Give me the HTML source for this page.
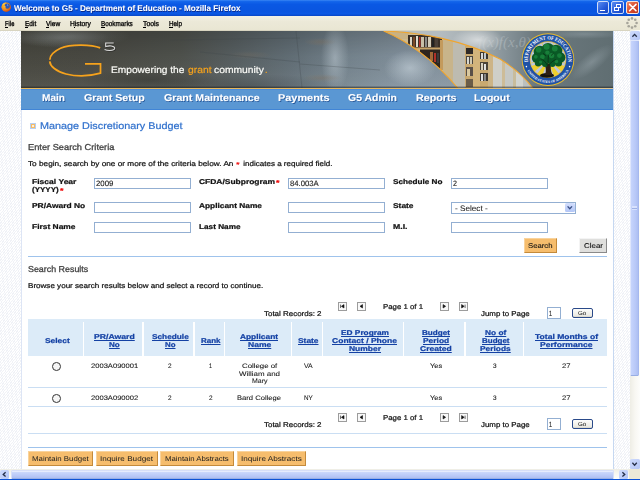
<!DOCTYPE html>
<html><head><meta charset="utf-8"><title>Welcome to G5 - Department of Education</title>
<style>
html,body{margin:0;padding:0;}
body{width:640px;height:480px;overflow:hidden;position:relative;background:#fff;font-family:"Liberation Sans",sans-serif;}
.a{position:absolute;}
.t{position:absolute;white-space:pre;line-height:1;transform-origin:0 0;-webkit-text-stroke:0.22px;text-rendering:geometricPrecision;}
.in{position:absolute;box-sizing:border-box;border:1px solid #93afd2;background:#fff;height:11px;}
.ln{position:absolute;left:27.5px;width:579.5px;height:1px;background:#cadef3;}
.sep{position:absolute;top:321.5px;height:34.5px;width:1.2px;background:#fff;}
.ob{position:absolute;box-sizing:border-box;background:#f6bd6d;border-top:1px solid #f9d39c;border-left:1px solid #f9d39c;border-right:1px solid #c48a3a;border-bottom:1px solid #c48a3a;}
.pi{position:absolute;box-sizing:border-box;width:8.6px;height:8.6px;border:0.8px solid #9c9c9c;background:#f8f8f8;}
</style></head><body>

<!-- page background hatch + content -->
<div class="a" style="left:0;top:30px;width:640px;height:440px;background:repeating-linear-gradient(128deg,#ffffff 0,#ffffff 1.0px,#f0f2f7 1.0px,#f0f2f7 1.9px);"></div>
<div class="a" style="left:20.5px;top:30.5px;width:593.5px;height:439px;background:#fff;border-left:1px solid #dde5f5;border-right:1px solid #c6d8f1;box-sizing:border-box;"></div>

<svg class="a" style="left:21px;top:31px;" width="592" height="57" viewBox="21 31 592 57" preserveAspectRatio="none">
<defs>
<linearGradient id="bg" x1="21" x2="613" y1="0" y2="0" gradientUnits="userSpaceOnUse">
<stop offset="0" stop-color="#4a4a42"/><stop offset="0.12" stop-color="#4b4b44"/><stop offset="0.27" stop-color="#51544f"/>
<stop offset="0.36" stop-color="#596163"/><stop offset="0.46" stop-color="#65727a"/><stop offset="0.55" stop-color="#778690"/>
<stop offset="0.65" stop-color="#8594a0"/><stop offset="1" stop-color="#8f9ba3"/>
</linearGradient>
<linearGradient id="vshade" x1="0" x2="0" y1="31" y2="88" gradientUnits="userSpaceOnUse">
<stop offset="0" stop-color="#000" stop-opacity="0.20"/><stop offset="0.45" stop-color="#000" stop-opacity="0.04"/><stop offset="1" stop-color="#fff" stop-opacity="0.06"/>
</linearGradient>
<linearGradient id="chalk" x1="440" x2="613" y1="0" y2="0" gradientUnits="userSpaceOnUse">
<stop offset="0" stop-color="#b4bcc0"/><stop offset="0.22" stop-color="#a3acb0"/><stop offset="0.38" stop-color="#879399"/><stop offset="0.55" stop-color="#6c797e"/><stop offset="1" stop-color="#606e72"/>
</linearGradient>
<radialGradient id="glow1" cx="0.5" cy="0.5" r="0.5"><stop offset="0" stop-color="#fff" stop-opacity="0.55"/><stop offset="1" stop-color="#fff" stop-opacity="0"/></radialGradient>
<radialGradient id="glow2" cx="0.5" cy="0.5" r="0.5"><stop offset="0" stop-color="#c8d4dc" stop-opacity="0.6"/><stop offset="1" stop-color="#c8d4dc" stop-opacity="0"/></radialGradient>
<radialGradient id="dark1" cx="0.5" cy="0.5" r="0.5"><stop offset="0" stop-color="#000" stop-opacity="0.22"/><stop offset="1" stop-color="#000" stop-opacity="0"/></radialGradient>
<radialGradient id="brown" cx="0.5" cy="0.5" r="0.5"><stop offset="0" stop-color="#7e6e5c" stop-opacity="0.38"/><stop offset="1" stop-color="#8a7860" stop-opacity="0"/></radialGradient>
<clipPath id="leaf"><path d="M383.75 31 Q417 32.5 442 38.4 Q475 46 500 59 Q521 72 533 88.5 L458 88.5 C435 60 405 40 383.75 31Z"/></clipPath>
<clipPath id="chalkclip"><path d="M383.75 31 Q417 32.5 442 38.4 Q475 46 500 59 Q521 72 533 88.5 L613 88.5 L613 31Z"/></clipPath>
</defs>
<rect x="21" y="31" width="592" height="57" fill="url(#bg)"/>
<rect x="21" y="31" width="592" height="57" fill="url(#vshade)"/>
<!-- floor texture -->
<ellipse cx="335" cy="58" rx="14" ry="36" fill="url(#glow2)" opacity="0.8"/>
<ellipse cx="410" cy="68" rx="26" ry="18" fill="url(#glow2)"/>
<ellipse cx="60" cy="38" rx="50" ry="10" fill="url(#glow2)" opacity="0.25"/>
<ellipse cx="150" cy="80" rx="70" ry="12" fill="url(#dark1)"/>
<ellipse cx="250" cy="86" rx="100" ry="12" fill="url(#dark1)" opacity="0.8"/>
<ellipse cx="70" cy="36" rx="60" ry="12" fill="url(#glow2)" opacity="0.3"/>
<ellipse cx="320" cy="42" rx="16" ry="4" fill="url(#brown)"/>
<ellipse cx="322" cy="78" rx="20" ry="4" fill="url(#brown)"/>
<ellipse cx="250" cy="55" rx="22" ry="4" fill="url(#brown)" opacity="0.6"/>
<path d="M200 52 L300 62 M296 31 L302 88 M170 40 L300 38 M300 64 L380 70" stroke="#3e464a" stroke-width="0.8" opacity="0.35" fill="none"/>
<!-- chalkboard -->
<g clip-path="url(#chalkclip)">
<rect x="380" y="31" width="233" height="58" fill="url(#chalk)"/>
<ellipse cx="478" cy="40" rx="26" ry="12" fill="url(#glow1)"/>
<ellipse cx="592" cy="62" rx="26" ry="9" fill="url(#glow2)" opacity="0.45" transform="rotate(-38 592 62)"/>
<ellipse cx="585" cy="34" rx="40" ry="5" fill="url(#glow2)" opacity="0.4"/>

<text x="478" y="47" font-family="Liberation Serif, serif" font-style="italic" font-size="15" fill="#d4dadc" opacity="0.33">f(x)f(x,θ)</text>
</g>
<!-- library leaf -->
<g clip-path="url(#leaf)">
<rect x="380" y="31" width="160" height="58" fill="#cdb98f"/>
<rect x="383" y="31" width="26" height="8" fill="#c9b284"/>
<!-- first shelf -->
<rect x="408" y="35" width="34" height="13" fill="#3b3026"/>
<rect x="410" y="37" width="2" height="10" fill="#d8d4c8"/><rect x="413" y="37" width="2" height="10" fill="#7a4a2a"/><rect x="416" y="36" width="2" height="11" fill="#e0dcd0"/><rect x="419" y="37" width="1.5" height="10" fill="#b03028"/><rect x="421" y="37" width="3" height="10" fill="#c8c0a8"/><rect x="425" y="37" width="2" height="10" fill="#8a8a88"/><rect x="428" y="37" width="3" height="10" fill="#d4ccb8"/><rect x="432" y="38" width="2" height="9" fill="#222"/><rect x="435" y="38" width="3" height="9" fill="#4a4038"/>
<rect x="408" y="47.5" width="34" height="2" fill="#c9a468"/>
<rect x="420" y="49.5" width="22" height="20" fill="#2e251d"/>
<rect x="430" y="52" width="3" height="9" fill="#a06838"/><rect x="434" y="53" width="2" height="9" fill="#b03028"/><rect x="437" y="53" width="2" height="10" fill="#3a3a3a"/>
<rect x="440" y="40" width="3" height="30" fill="#c39a5c"/>
<rect x="443" y="40" width="10" height="48" fill="#c8b48a"/>
<rect x="453" y="42" width="12" height="46" fill="#bdbbb0"/>
<!-- second shelf unit -->
<rect x="465" y="46" width="32" height="42" fill="#c9a970"/>
<rect x="466" y="48" width="7" height="6" fill="#2e2a28"/><rect x="466" y="56" width="7" height="8" fill="#4a4640"/><rect x="467" y="57" width="2" height="7" fill="#d8d8d0"/><rect x="470" y="57" width="2" height="7" fill="#d0c8b0"/>
<rect x="466" y="67" width="7" height="9" fill="#5a5048"/><rect x="467" y="69" width="3" height="7" fill="#d8c8a0"/>
<rect x="466" y="79" width="7" height="8" fill="#6a5c48"/>
<rect x="473" y="46" width="7" height="42" fill="#d2b47c"/>
<rect x="480" y="52" width="8" height="7" fill="#3a3632"/><rect x="481" y="53" width="2" height="6" fill="#d8d8d8"/><rect x="484" y="53" width="2" height="6" fill="#c0c8d0"/>
<rect x="480" y="62" width="8" height="8" fill="#4a4238"/><rect x="481" y="63" width="2" height="7" fill="#d8d0c0"/><rect x="484" y="64" width="2" height="6" fill="#e0e0e0"/>
<rect x="480" y="73" width="8" height="8" fill="#3e3830"/><rect x="481" y="74" width="2" height="7" fill="#e0e0e0"/><rect x="484" y="74" width="2" height="7" fill="#888"/>
<rect x="488" y="50" width="5" height="38" fill="#cdb486"/>
<rect x="493" y="55" width="9" height="33" fill="#cfcfc8"/>
<rect x="502" y="60" width="3" height="28" fill="#cdbc98"/>
<rect x="505" y="62" width="8" height="26" fill="#c6c8c4"/>
<rect x="513" y="66" width="3" height="22" fill="#c8bc9c"/>
<rect x="516" y="68" width="7" height="20" fill="#d2d4d0"/>
<rect x="523" y="74" width="10" height="14" fill="#bcc0be"/>
</g>
<!-- orange curves -->
<path d="M383.75 31 C405 40 435 60 458 88.5" fill="none" stroke="#f0a630" stroke-width="1.1"/>
<path d="M383.75 31 Q417 32.5 442 38.4 Q475 46 500 59 Q521 72 533 88.5" fill="none" stroke="#f0a630" stroke-width="1.1"/>
<!-- seal -->
<g>
<circle cx="548" cy="59.6" r="26.3" fill="#e9bb2c"/>
<circle cx="548" cy="59.6" r="25.4" fill="#1f52a6"/>
<circle cx="548" cy="59.6" r="18.3" fill="#e2b83a"/>
<circle cx="548" cy="59.6" r="17.5" fill="#bcc6dc"/>
<g stroke="#e8cf3a" stroke-width="0.7" opacity="0.9"><path d="M548 59.6 L531 56 M548 59.6 L532 50 M548 59.6 L536 45.5 M548 59.6 L542 43 M548 59.6 L548 42.2 M548 59.6 L554 43 M548 59.6 L560 45.5 M548 59.6 L564 50 M548 59.6 L565 56 M548 59.6 L565 63 M548 59.6 L531 63"/></g>
<path d="M548 60 L531.6 66 L534.6 71.6 Z M548 60 L537 74 L542 76.4 Z M548 60 L545 77 L551 77 Z M548 60 L554 76.4 L559 74 Z M548 60 L561.4 71.6 L564.4 66 Z" fill="#f0d024" opacity="0.95"/>
<ellipse cx="547" cy="75.4" rx="7" ry="2.3" fill="#17150f"/>
<path d="M545.2 75 C546.4 70.5 546 67 544.2 63.5 L551.4 63.5 C550.2 67 550.6 71 552.6 75 Z" fill="#2e2014"/>
<g fill="#0a5a26"><circle cx="540.0" cy="52.0" r="6.3"/><circle cx="548.0" cy="49.2" r="6.3"/><circle cx="556.0" cy="51.0" r="6.3"/><circle cx="536.6" cy="58.0" r="4.8"/><circle cx="543.0" cy="59.5" r="5.5"/><circle cx="552.0" cy="58.5" r="6.0"/><circle cx="560.0" cy="57.5" r="5.4"/><circle cx="538.2" cy="63.0" r="3.4"/><circle cx="558.5" cy="63.0" r="3.6"/><circle cx="548.0" cy="55.0" r="7.0"/><circle cx="545.0" cy="64.0" r="3.0"/><circle cx="552.5" cy="64.0" r="3.0"/></g>
<g fill="#1f8f42" opacity="0.7"><circle cx="538.6" cy="49.8" r="2.8"/><circle cx="546.6" cy="46.8" r="3.0"/><circle cx="554.8" cy="48.6" r="2.9"/><circle cx="542.4" cy="57.0" r="2.4"/><circle cx="551.6" cy="55.6" r="2.7"/><circle cx="559.4" cy="55.6" r="2.4"/><circle cx="535.8" cy="56.8" r="1.9"/><circle cx="547.4" cy="52.6" r="2.2"/><circle cx="556.4" cy="61.4" r="1.8"/><circle cx="540.6" cy="62.0" r="1.6"/></g>
<path d="M547.6 66 C546 62 543.6 60 540.6 58.6 M548 65 C548 61 548.2 58 548.6 55.4 M548.6 66 C550.6 62.4 553 60.6 556.4 59.4 M543 53.4 l3 2.4 M553.6 53.2 l-2.6 2.4" stroke="#0a2a14" stroke-width="0.9" fill="none" opacity="0.8"/>
<g font-family="Liberation Serif, serif" font-weight="bold" fill="#fff"><text transform="translate(527.92 60.40) rotate(-92.3) scale(0.833 1)" text-anchor="middle" font-size="5.4">D</text><text transform="translate(528.03 57.28) rotate(-83.4) scale(0.833 1)" text-anchor="middle" font-size="5.4">E</text><text transform="translate(528.57 54.46) rotate(-75.2) scale(0.833 1)" text-anchor="middle" font-size="5.4">P</text><text transform="translate(529.55 51.63) rotate(-66.6) scale(0.833 1)" text-anchor="middle" font-size="5.4">A</text><text transform="translate(531.07 48.76) rotate(-57.4) scale(0.833 1)" text-anchor="middle" font-size="5.4">R</text><text transform="translate(532.96 46.27) rotate(-48.5) scale(0.833 1)" text-anchor="middle" font-size="5.4">T</text><text transform="translate(535.59 43.79) rotate(-38.1) scale(0.833 1)" text-anchor="middle" font-size="5.4">M</text><text transform="translate(538.63 41.82) rotate(-27.8) scale(0.833 1)" text-anchor="middle" font-size="5.4">E</text><text transform="translate(541.49 40.58) rotate(-18.9) scale(0.833 1)" text-anchor="middle" font-size="5.4">N</text><text transform="translate(544.52 39.80) rotate(-10.0) scale(0.833 1)" text-anchor="middle" font-size="5.4">T</text><text transform="translate(548.87 39.52) rotate(2.5) scale(0.833 1)" text-anchor="middle" font-size="5.4">O</text><text transform="translate(551.97 39.90) rotate(11.4) scale(0.833 1)" text-anchor="middle" font-size="5.4">F</text><text transform="translate(555.79 41.07) rotate(22.8) scale(0.833 1)" text-anchor="middle" font-size="5.4">E</text><text transform="translate(558.57 42.50) rotate(31.7) scale(0.833 1)" text-anchor="middle" font-size="5.4">D</text><text transform="translate(561.18 44.42) rotate(41.0) scale(0.833 1)" text-anchor="middle" font-size="5.4">U</text><text transform="translate(563.45 46.74) rotate(50.2) scale(0.833 1)" text-anchor="middle" font-size="5.4">C</text><text transform="translate(565.32 49.40) rotate(59.5) scale(0.833 1)" text-anchor="middle" font-size="5.4">A</text><text transform="translate(566.69 52.20) rotate(68.4) scale(0.833 1)" text-anchor="middle" font-size="5.4">T</text><text transform="translate(567.43 54.46) rotate(75.2) scale(0.833 1)" text-anchor="middle" font-size="5.4">I</text><text transform="translate(567.94 57.03) rotate(82.7) scale(0.833 1)" text-anchor="middle" font-size="5.4">O</text><text transform="translate(568.08 60.40) rotate(92.3) scale(0.833 1)" text-anchor="middle" font-size="5.4">N</text><text transform="translate(527.98 71.72) rotate(58.8) scale(0.951 1)" text-anchor="middle" font-size="3.6">U</text><text transform="translate(529.37 73.77) rotate(52.7) scale(0.951 1)" text-anchor="middle" font-size="3.6">N</text><text transform="translate(530.59 75.23) rotate(48.1) scale(0.951 1)" text-anchor="middle" font-size="3.6">I</text><text transform="translate(531.84 76.53) rotate(43.7) scale(0.951 1)" text-anchor="middle" font-size="3.6">T</text><text transform="translate(533.57 78.02) rotate(38.1) scale(0.951 1)" text-anchor="middle" font-size="3.6">E</text><text transform="translate(535.51 79.39) rotate(32.2) scale(0.951 1)" text-anchor="middle" font-size="3.6">D</text><text transform="translate(538.19 80.84) rotate(24.8) scale(0.951 1)" text-anchor="middle" font-size="3.6">S</text><text transform="translate(540.12 81.63) rotate(19.7) scale(0.951 1)" text-anchor="middle" font-size="3.6">T</text><text transform="translate(542.40 82.32) rotate(13.8) scale(0.951 1)" text-anchor="middle" font-size="3.6">A</text><text transform="translate(544.73 82.77) rotate(8.0) scale(0.951 1)" text-anchor="middle" font-size="3.6">T</text><text transform="translate(547.01 82.98) rotate(2.4) scale(0.951 1)" text-anchor="middle" font-size="3.6">E</text><text transform="translate(549.10 82.97) rotate(-2.7) scale(0.951 1)" text-anchor="middle" font-size="3.6">S</text><text transform="translate(552.21 82.62) rotate(-10.4) scale(0.951 1)" text-anchor="middle" font-size="3.6">O</text><text transform="translate(554.53 82.07) rotate(-16.2) scale(0.951 1)" text-anchor="middle" font-size="3.6">F</text><text transform="translate(557.47 81.00) rotate(-23.9) scale(0.951 1)" text-anchor="middle" font-size="3.6">A</text><text transform="translate(560.00 79.69) rotate(-30.9) scale(0.951 1)" text-anchor="middle" font-size="3.6">M</text><text transform="translate(562.28 78.14) rotate(-37.6) scale(0.951 1)" text-anchor="middle" font-size="3.6">E</text><text transform="translate(564.09 76.59) rotate(-43.4) scale(0.951 1)" text-anchor="middle" font-size="3.6">R</text><text transform="translate(565.41 75.23) rotate(-48.1) scale(0.951 1)" text-anchor="middle" font-size="3.6">I</text><text transform="translate(566.63 73.77) rotate(-52.7) scale(0.951 1)" text-anchor="middle" font-size="3.6">C</text><text transform="translate(568.02 71.72) rotate(-58.8) scale(0.951 1)" text-anchor="middle" font-size="3.6">A</text></g>
<circle cx="526.4" cy="66.6" r="0.8" fill="#fff"/><circle cx="569.6" cy="66.6" r="0.8" fill="#fff"/>
</g>
<rect x="21" y="86.6" width="592" height="1.4" fill="#1a1c1a" opacity="0.5"/>
<!-- 5 -->
<path d="M113.7 43 L105.7 43 L105.7 46.5 C108 45.9 110 45.8 111.2 46 C113.6 46.4 114.8 47.3 114.7 48.4 C114.5 49.8 112.4 50.4 109.8 50.4 C107.6 50.4 105.8 50.1 104.6 49.5" fill="none" stroke="#1c1c1a" stroke-width="1.1" opacity="0.55" transform="translate(0.7 0.7)"/>
<path d="M113.7 43 L105.7 43 L105.7 46.5 C108 45.9 110 45.8 111.2 46 C113.6 46.4 114.8 47.3 114.7 48.4 C114.5 49.8 112.4 50.4 109.8 50.4 C107.6 50.4 105.8 50.1 104.6 49.5" fill="none" stroke="#dedede" stroke-width="1.05"/>
<!-- G logo -->
<g fill="none" stroke="#f6a21c" stroke-width="1.75" stroke-linecap="butt" stroke-linejoin="miter">
<path d="M100.2 47.9 C92 44.6 71 43.6 60.5 48.3 C53.5 51.6 50 55.8 49.8 59.7"/>
<path d="M49.7 61.3 C50.2 66.2 56 71.4 66 74 C78 77 92 75.6 100.5 73.2 L100.5 63.8 L85 63.8"/>
</g>
</svg>


<!-- gold line + nav -->
<div class="a" style="left:21px;top:87.9px;width:592px;height:1.2px;background:linear-gradient(90deg,#e8b85c 0,#e6b65c 60%,#dcc492 100%);"></div>
<div class="a" style="left:21px;top:89px;width:592px;height:20.6px;background:#5a97d3;border-top:1px solid #4c8cd9;border-bottom:1px solid #4185d6;box-sizing:border-box;"></div>

<!-- heading icon -->
<div class="a" style="left:30.2px;top:123px;width:5.8px;height:5.8px;box-sizing:border-box;border:0.9px solid #b7cff2;background:#f7bc66;"></div>
<div class="a" style="left:32.4px;top:125.1px;width:1.8px;height:1.6px;background:#fdf0dc;"></div>

<!-- form inputs -->
<div class="in" style="left:94px;top:178px;width:96.5px;"></div>
<div class="in" style="left:94px;top:202px;width:96.5px;"></div>
<div class="in" style="left:94px;top:222px;width:96.5px;"></div>
<div class="in" style="left:288px;top:178px;width:96.5px;"></div>
<div class="in" style="left:288px;top:202px;width:96.5px;"></div>
<div class="in" style="left:288px;top:222px;width:96.5px;"></div>
<div class="in" style="left:451px;top:178px;width:96.5px;"></div>
<div class="in" style="left:451px;top:222px;width:96.5px;"></div>
<div class="in" style="left:451px;top:202px;width:125px;height:11.5px;"></div>
<div class="a" style="left:565px;top:203.2px;width:9.6px;height:9.2px;background:linear-gradient(#d4dffd,#b3c6f6);border-radius:1.5px;"></div>
<svg class="a" style="left:565px;top:203.2px;" width="9.6" height="9.2" viewBox="0 0 9.6 9.2"><path d="M2.6 3.4 L4.8 5.8 L7 3.4" fill="none" stroke="#3a4f86" stroke-width="1.4"/></svg>

<!-- search / clear -->
<div class="ob" style="left:523.5px;top:238px;width:33px;height:14.5px;"></div>
<div class="a" style="left:579px;top:238px;width:28px;height:14.5px;box-sizing:border-box;background:#dfdfdd;border-top:1px solid #f4f4f4;border-left:1px solid #f4f4f4;border-right:1px solid #8a8a8a;border-bottom:1px solid #8a8a8a;"></div>

<!-- rules -->
<div class="ln" style="top:256px;background:#9fc3ec;"></div>
<div class="ln" style="top:387px;"></div>
<div class="ln" style="top:406px;"></div>
<div class="ln" style="top:432.6px;"></div>
<div class="ln" style="top:447px;background:#9fc3ec;"></div>

<!-- table header -->
<div class="a" style="left:27.5px;top:318.7px;width:579px;height:37.2px;background:#dcebf8;"></div>
<div class="sep" style="left:82.7px;"></div>
<div class="sep" style="left:142.4px;"></div>
<div class="sep" style="left:193.4px;"></div>
<div class="sep" style="left:223.9px;"></div>
<div class="sep" style="left:290.7px;"></div>
<div class="sep" style="left:321.9px;"></div>
<div class="sep" style="left:402.7px;"></div>
<div class="sep" style="left:464.4px;"></div>
<div class="sep" style="left:522.7px;"></div>

<!-- radios -->
<div class="a" style="left:52.3px;top:362.3px;width:8.8px;height:8.8px;border-radius:50%;box-sizing:border-box;border:1px solid #333;background:#f6f6f6;"></div>
<div class="a" style="left:52.3px;top:393.9px;width:8.8px;height:8.8px;border-radius:50%;box-sizing:border-box;border:1px solid #333;background:#f6f6f6;"></div>

<div class="pi" style="left:338.2px;top:302.2px;"></div>
<svg class="a" style="left:338.2px;top:302.2px;" width="8.6" height="8.6" viewBox="0 0 8.6 8.6"><path d="M2.5 2.6 V6.0 M6.0 2.6 L3.4 4.3 L6.0 6.0 Z" fill="#111" stroke="#111" stroke-width="0.6"/></svg>
<div class="pi" style="left:357.2px;top:302.2px;"></div>
<svg class="a" style="left:357.2px;top:302.2px;" width="8.6" height="8.6" viewBox="0 0 8.6 8.6"><path d="M5.5 2.6 L3.0 4.3 L5.5 6.0 Z" fill="#111" stroke="#111" stroke-width="0.6"/></svg>
<div class="pi" style="left:440.1px;top:302.2px;"></div>
<svg class="a" style="left:440.1px;top:302.2px;" width="8.6" height="8.6" viewBox="0 0 8.6 8.6"><path d="M3.1 2.6 L5.6 4.3 L3.1 6.0 Z" fill="#111" stroke="#111" stroke-width="0.6"/></svg>
<div class="pi" style="left:459.0px;top:302.2px;"></div>
<svg class="a" style="left:459.0px;top:302.2px;" width="8.6" height="8.6" viewBox="0 0 8.6 8.6"><path d="M6.1 2.6 V6.0 M2.6 2.6 L5.2 4.3 L2.6 6.0 Z" fill="#111" stroke="#111" stroke-width="0.6"/></svg>
<div class="in" style="left:546.8px;top:307.0px;width:14.6px;height:11.6px;"></div>
<div class="a" style="left:572px;top:308.2px;width:21px;height:10px;box-sizing:border-box;border:0.9px solid #2a4a8a;border-radius:2px;background:linear-gradient(#fdfdfb,#ecebe4 80%,#d8d4c6);"></div>
<div class="pi" style="left:338.2px;top:413.2px;"></div>
<svg class="a" style="left:338.2px;top:413.2px;" width="8.6" height="8.6" viewBox="0 0 8.6 8.6"><path d="M2.5 2.6 V6.0 M6.0 2.6 L3.4 4.3 L6.0 6.0 Z" fill="#111" stroke="#111" stroke-width="0.6"/></svg>
<div class="pi" style="left:357.2px;top:413.2px;"></div>
<svg class="a" style="left:357.2px;top:413.2px;" width="8.6" height="8.6" viewBox="0 0 8.6 8.6"><path d="M5.5 2.6 L3.0 4.3 L5.5 6.0 Z" fill="#111" stroke="#111" stroke-width="0.6"/></svg>
<div class="pi" style="left:440.1px;top:413.2px;"></div>
<svg class="a" style="left:440.1px;top:413.2px;" width="8.6" height="8.6" viewBox="0 0 8.6 8.6"><path d="M3.1 2.6 L5.6 4.3 L3.1 6.0 Z" fill="#111" stroke="#111" stroke-width="0.6"/></svg>
<div class="pi" style="left:459.0px;top:413.2px;"></div>
<svg class="a" style="left:459.0px;top:413.2px;" width="8.6" height="8.6" viewBox="0 0 8.6 8.6"><path d="M6.1 2.6 V6.0 M2.6 2.6 L5.2 4.3 L2.6 6.0 Z" fill="#111" stroke="#111" stroke-width="0.6"/></svg>
<div class="in" style="left:546.8px;top:418.0px;width:14.6px;height:11.6px;"></div>
<div class="a" style="left:572px;top:419.2px;width:21px;height:10px;box-sizing:border-box;border:0.9px solid #2a4a8a;border-radius:2px;background:linear-gradient(#fdfdfb,#ecebe4 80%,#d8d4c6);"></div>

<!-- bottom buttons -->
<div class="ob" style="left:27.8px;top:451.4px;width:65.2px;height:14.2px;"></div>
<div class="ob" style="left:95.8px;top:451.4px;width:61.8px;height:14.2px;"></div>
<div class="ob" style="left:160.4px;top:451.4px;width:73.6px;height:14.2px;"></div>
<div class="ob" style="left:236.6px;top:451.4px;width:69.4px;height:14.2px;"></div>

<!-- title bar -->
<div class="a" style="left:0;top:0;width:640px;height:16px;background:linear-gradient(#3a86f4 0,#1264ea 10%,#0a58e4 28%,#0a55e0 70%,#0b58e4 86%,#0846c6 100%);"></div>
<!-- firefox icon -->
<svg class="a" style="left:1.2px;top:2px;" width="10.4" height="10" viewBox="0 0 12 12">
<defs><radialGradient id="fxo" cx="0.35" cy="0.3" r="0.8"><stop offset="0" stop-color="#fcc030"/><stop offset="0.55" stop-color="#f08a1c"/><stop offset="1" stop-color="#cc4410"/></radialGradient></defs>
<circle cx="6" cy="6.2" r="5.6" fill="url(#fxo)"/>
<circle cx="7.2" cy="4.9" r="3.2" fill="#2c56b8"/>
<path d="M6.6 2 C7.6 2.6 7.8 3.8 7.2 4.8 L8.4 5 C8.8 3.6 8 2.4 6.6 2Z" fill="#7aa8ec"/>
<path d="M0.6 5.4 C0.8 9.4 4.2 11.8 7.6 11.2 C10 10.6 11.6 8.4 11.4 6 C10.6 8.4 8.6 9.4 6.6 8.8 C4.8 8.2 4.6 6.4 5.8 5.6 C4.2 5.4 3.4 4 4 2.4 C2.2 3 0.6 4 0.6 5.4Z" fill="url(#fxo)"/>
<path d="M1 4.2 C1.8 2 3.8 0.8 6 0.7 C4.6 1.4 3.8 2.3 3.6 3.4 Z" fill="#f8c848"/>
</svg>
<!-- window buttons -->
<div class="a" style="left:597px;top:1.2px;width:12.4px;height:13.2px;box-sizing:border-box;border:0.8px solid #cfdcf8;border-radius:2px;background:linear-gradient(135deg,#5a8cf0,#2458d8 60%,#1a48c0);"></div>
<div class="a" style="left:600.2px;top:9.6px;width:4.4px;height:1.6px;background:#fff;"></div>
<div class="a" style="left:611.2px;top:1.2px;width:13.2px;height:13.2px;box-sizing:border-box;border:0.8px solid #cfdcf8;border-radius:2px;background:linear-gradient(135deg,#5a8cf0,#2458d8 60%,#1a48c0);"></div>
<div class="a" style="left:616.4px;top:4.2px;width:5px;height:4.2px;box-sizing:border-box;border:0.9px solid #fff;border-top-width:1.4px;"></div>
<div class="a" style="left:614.4px;top:6.6px;width:5px;height:4.4px;box-sizing:border-box;border:0.9px solid #fff;border-top-width:1.4px;background:#2a5cd8;"></div>
<div class="a" style="left:625.6px;top:1.2px;width:13.6px;height:13.2px;box-sizing:border-box;border:0.8px solid #f4e4dc;border-radius:2px;background:linear-gradient(135deg,#ec8a68,#d8482a 55%,#b8341c);"></div>
<svg class="a" style="left:625.6px;top:1.2px;" width="13.6" height="13.2" viewBox="0 0 13.6 13.2"><path d="M3.6 3.4 L10 9.8 M10 3.4 L3.6 9.8" stroke="#fff" stroke-width="1.6" stroke-linecap="round"/></svg>

<!-- menu bar -->
<div class="a" style="left:0;top:16px;width:640px;height:14.4px;background:linear-gradient(#f3f1e6,#ece9d8 40%,#e9e6d3);"></div>
<div class="a" style="left:0;top:29.8px;width:640px;height:0.8px;background:#d8d4c0;"></div>
<svg class="a" style="left:626px;top:17px;" width="12" height="12" viewBox="0 0 12 12"><g fill="#a6a49a"><circle cx="10.60" cy="6.00" r="1.3"/><circle cx="9.25" cy="9.25" r="1.3"/><circle cx="6.00" cy="10.60" r="1.3"/><circle cx="2.75" cy="9.25" r="1.3"/><circle cx="1.40" cy="6.00" r="1.3"/><circle cx="2.75" cy="2.75" r="1.3"/><circle cx="6.00" cy="1.40" r="1.3"/><circle cx="9.25" cy="2.75" r="1.3"/></g></svg>

<!-- vertical scrollbar -->
<div class="a" style="left:630px;top:30.4px;width:10px;height:439px;background:linear-gradient(90deg,#eeede5,#f8f7f2 50%,#fdfdfb);"></div>
<div class="a" style="left:630.4px;top:40px;width:9px;height:335.6px;box-sizing:border-box;border-radius:1.5px;background:linear-gradient(90deg,#c6d4fc,#b9c9f8 60%,#adbff2);border:0.6px solid #dfe6fc;border-bottom-color:#98aee4;border-right-color:#a6b8ee;"></div>
<div class="a" style="left:632.4px;top:205.6px;width:4.6px;height:4.4px;background:repeating-linear-gradient(#dfe7ff 0,#dfe7ff 0.7px,#97abe0 0.7px,#97abe0 1.4px);opacity:.8;"></div>
<div class="a" style="left:630.4px;top:30.6px;width:9.2px;height:9.4px;border-radius:1.5px;background:linear-gradient(135deg,#cfdbfd,#b4c5f6);"></div>
<svg class="a" style="left:630.4px;top:30.6px;" width="9.2" height="9.4" viewBox="0 0 9.2 9.4"><path d="M2.4 5.8 L4.6 3.4 L6.8 5.8" fill="none" stroke="#262f48" stroke-width="1.3"/></svg>
<div class="a" style="left:630.4px;top:459.2px;width:9.2px;height:9.8px;border-radius:1.5px;background:linear-gradient(135deg,#cfdbfd,#b4c5f6);"></div>
<svg class="a" style="left:630.4px;top:459.2px;" width="9.2" height="9.8" viewBox="0 0 9.2 9.8"><path d="M2.4 3.8 L4.6 6.2 L6.8 3.8" fill="none" stroke="#262f48" stroke-width="1.3"/></svg>

<!-- horizontal scrollbar -->
<div class="a" style="left:0;top:469.4px;width:640px;height:9.4px;background:linear-gradient(#eeede5,#f8f7f2 50%,#fdfdfb);"></div>
<div class="a" style="left:628.6px;top:469.4px;width:11.4px;height:9.4px;background:#ece9d8;"></div>
<div class="a" style="left:10.6px;top:469.8px;width:603.4px;height:8.8px;box-sizing:border-box;border-radius:1.5px;background:linear-gradient(#f4f6fe 0,#c8d5fb 22%,#bccbf8 60%,#aebff2);border:0.5px solid #d6def8;border-bottom-color:#98aee4;"></div>
<div class="a" style="left:0.2px;top:469.8px;width:8.8px;height:8.8px;border-radius:1.5px;background:linear-gradient(135deg,#cfdbfd,#b4c5f6);"></div>
<svg class="a" style="left:0.2px;top:469.8px;" width="8.8" height="8.8" viewBox="0 0 8.8 8.8"><path d="M5.6 2.2 L3.2 4.4 L5.6 6.6" fill="none" stroke="#262f48" stroke-width="1.3"/></svg>
<div class="a" style="left:619.2px;top:469.8px;width:9.2px;height:8.8px;border-radius:1.5px;background:linear-gradient(135deg,#cfdbfd,#b4c5f6);"></div>
<svg class="a" style="left:619.2px;top:469.8px;" width="9.2" height="8.8" viewBox="0 0 9.2 8.8"><path d="M3.4 2.2 L5.8 4.4 L3.4 6.6" fill="none" stroke="#262f48" stroke-width="1.3"/></svg>
<!-- bottom border -->
<div class="a" style="left:0;top:478.7px;width:640px;height:1.3px;background:#0c52d6;"></div>

<div class="a" style="left:5.0px;top:26.7px;width:3.2px;height:0.7px;background:#000;"></div><div class="a" style="left:24.8px;top:26.7px;width:3.6px;height:0.7px;background:#000;"></div><div class="a" style="left:45.6px;top:26.7px;width:3.8px;height:0.7px;background:#000;"></div><div class="a" style="left:73.6px;top:26.7px;width:1.4px;height:0.7px;background:#000;"></div><div class="a" style="left:100.8px;top:26.7px;width:3.8px;height:0.7px;background:#000;"></div><div class="a" style="left:143.0px;top:26.7px;width:3.4px;height:0.7px;background:#000;"></div><div class="a" style="left:168.5px;top:26.7px;width:4.2px;height:0.7px;background:#000;"></div>

<div class="a" style="left:0;top:0;width:640px;height:480px;will-change:transform;">
<span class="t" style="left:14.00px;top:4px;font-size:8.40px;color:#fff;transform:scaleX(0.9722);font-weight:bold;text-shadow:0.6px 0.6px 0 #0a2a8a;-webkit-text-stroke:0.08px;">Welcome to G5 - Department of Education - Mozilla Firefox</span>
<span class="t" style="left:5.00px;top:20px;font-size:7.20px;color:#000;transform:scaleX(0.8108);-webkit-text-stroke:0.3px;">File</span>
<span class="t" style="left:24.75px;top:20px;font-size:7.20px;color:#000;transform:scaleX(0.9079);-webkit-text-stroke:0.3px;">Edit</span>
<span class="t" style="left:45.60px;top:20px;font-size:7.20px;color:#000;transform:scaleX(0.9157);-webkit-text-stroke:0.3px;">View</span>
<span class="t" style="left:69.50px;top:20px;font-size:7.20px;color:#000;transform:scaleX(0.9385);-webkit-text-stroke:0.3px;">History</span>
<span class="t" style="left:100.75px;top:20px;font-size:7.20px;color:#000;transform:scaleX(0.8831);-webkit-text-stroke:0.3px;">Bookmarks</span>
<span class="t" style="left:143.00px;top:20px;font-size:7.20px;color:#000;transform:scaleX(0.9534);-webkit-text-stroke:0.3px;">Tools</span>
<span class="t" style="left:168.50px;top:20px;font-size:7.20px;color:#000;transform:scaleX(0.8786);-webkit-text-stroke:0.3px;">Help</span>
<span class="t" style="left:110.80px;top:66px;font-size:9.60px;color:#fafaf6;transform:scaleX(1.0587);-webkit-text-stroke:0.2px;">Empowering the</span>
<span class="t" style="left:187.80px;top:66px;font-size:9.60px;color:#f5a21c;transform:scaleX(1.0743);-webkit-text-stroke:0.2px;">grant</span>
<span class="t" style="left:213.90px;top:66px;font-size:9.60px;color:#fafaf6;transform:scaleX(1.0756);-webkit-text-stroke:0.2px;">community</span>
<span class="t" style="left:264.60px;top:66px;font-size:9.60px;color:#f5a21c;transform:scaleX(0.9731);">.</span>
<span class="t" style="left:42.00px;top:94px;font-size:9.90px;color:#fff;transform:scaleX(1.0222);font-weight:bold;text-shadow:0.8px 0.8px 0.6px #2c5c9c;-webkit-text-stroke:0.12px;">Main</span>
<span class="t" style="left:83.75px;top:94px;font-size:9.90px;color:#fff;transform:scaleX(1.0749);font-weight:bold;text-shadow:0.8px 0.8px 0.6px #2c5c9c;-webkit-text-stroke:0.12px;">Grant Setup</span>
<span class="t" style="left:163.75px;top:94px;font-size:9.90px;color:#fff;transform:scaleX(1.0759);font-weight:bold;text-shadow:0.8px 0.8px 0.6px #2c5c9c;-webkit-text-stroke:0.12px;">Grant Maintenance</span>
<span class="t" style="left:278.00px;top:94px;font-size:9.90px;color:#fff;transform:scaleX(1.1038);font-weight:bold;text-shadow:0.8px 0.8px 0.6px #2c5c9c;-webkit-text-stroke:0.12px;">Payments</span>
<span class="t" style="left:348.00px;top:94px;font-size:9.90px;color:#fff;transform:scaleX(1.0587);font-weight:bold;text-shadow:0.8px 0.8px 0.6px #2c5c9c;-webkit-text-stroke:0.12px;">G5 Admin</span>
<span class="t" style="left:415.75px;top:94px;font-size:9.90px;color:#fff;transform:scaleX(1.0854);font-weight:bold;text-shadow:0.8px 0.8px 0.6px #2c5c9c;-webkit-text-stroke:0.12px;">Reports</span>
<span class="t" style="left:474.25px;top:94px;font-size:9.90px;color:#fff;transform:scaleX(1.0687);font-weight:bold;text-shadow:0.8px 0.8px 0.6px #2c5c9c;-webkit-text-stroke:0.12px;">Logout</span>
<span class="t" style="left:40.00px;top:122px;font-size:9.70px;color:#3272cd;transform:scaleX(1.1166);">Manage Discretionary Budget</span>
<span class="t" style="left:27.80px;top:143px;font-size:8.60px;color:#444;transform:scaleX(1.0766);-webkit-text-stroke:0.3px;">Enter Search Criteria</span>
<span class="t" style="left:27.75px;top:161px;font-size:7.10px;color:#111;transform:scaleX(1.1604);">To begin, search by one or more of the criteria below. An </span>
<span class="t" style="left:236.30px;top:162px;font-size:7.10px;color:#e00;transform:scaleX(1.3379);">*</span>
<span class="t" style="left:240.50px;top:161px;font-size:7.10px;color:#111;transform:scaleX(1.1318);"> indicates a required field.</span>
<span class="t" style="left:32.25px;top:179px;font-size:7.00px;color:#111;transform:scaleX(1.2189);font-weight:bold;">Fiscal Year</span>
<span class="t" style="left:32.25px;top:187px;font-size:7.00px;color:#111;transform:scaleX(1.1459);font-weight:bold;">(YYYY)</span>
<span class="t" style="left:59.50px;top:188px;font-size:7.00px;color:#e00;transform:scaleX(1.2800);font-weight:bold;">*</span>
<span class="t" style="left:32.25px;top:203px;font-size:7.00px;color:#111;transform:scaleX(1.2042);font-weight:bold;">PR/Award No</span>
<span class="t" style="left:32.25px;top:224px;font-size:7.00px;color:#111;transform:scaleX(1.2021);font-weight:bold;">First Name</span>
<span class="t" style="left:199.00px;top:179px;font-size:7.00px;color:#111;transform:scaleX(1.2063);font-weight:bold;">CFDA/Subprogram</span>
<span class="t" style="left:275.50px;top:180px;font-size:7.00px;color:#e00;transform:scaleX(1.2800);font-weight:bold;">*</span>
<span class="t" style="left:199.00px;top:203px;font-size:7.00px;color:#111;transform:scaleX(1.1908);font-weight:bold;">Applicant Name</span>
<span class="t" style="left:199.00px;top:224px;font-size:7.00px;color:#111;transform:scaleX(1.1721);font-weight:bold;">Last Name</span>
<span class="t" style="left:392.50px;top:179px;font-size:7.00px;color:#111;transform:scaleX(1.1673);font-weight:bold;">Schedule No</span>
<span class="t" style="left:392.50px;top:203px;font-size:7.00px;color:#111;transform:scaleX(1.1971);font-weight:bold;">State</span>
<span class="t" style="left:392.50px;top:224px;font-size:7.00px;color:#111;transform:scaleX(1.2423);font-weight:bold;">M.I.</span>
<span class="t" style="left:95.75px;top:180px;font-size:7.80px;color:#222;transform:scaleX(1.0052);-webkit-text-stroke:0.12px;">2009</span>
<span class="t" style="left:289.50px;top:180px;font-size:7.80px;color:#222;transform:scaleX(0.9892);-webkit-text-stroke:0.12px;">84.003A</span>
<span class="t" style="left:452.80px;top:180px;font-size:7.80px;color:#222;transform:scaleX(0.9209);-webkit-text-stroke:0.12px;">2</span>
<span class="t" style="left:455.30px;top:205px;font-size:8.00px;color:#222;transform:scaleX(1.0214);-webkit-text-stroke:0.08px;">- Select -</span>
<span class="t" style="left:528.00px;top:243px;font-size:7.00px;color:#111;transform:scaleX(1.1042);-webkit-text-stroke:0.1px;">Search</span>
<span class="t" style="left:583.50px;top:243px;font-size:7.00px;color:#111;transform:scaleX(1.1354);-webkit-text-stroke:0.1px;">Clear</span>
<span class="t" style="left:27.80px;top:265px;font-size:8.60px;color:#444;transform:scaleX(1.0329);-webkit-text-stroke:0.3px;">Search Results</span>
<span class="t" style="left:27.75px;top:283px;font-size:7.10px;color:#111;transform:scaleX(1.1364);">Browse your search results below and select a record to continue.</span>
<span class="t" style="left:264.40px;top:311px;font-size:7.00px;color:#111;transform:scaleX(1.1365);">Total Records: 2</span>
<span class="t" style="left:382.50px;top:304px;font-size:7.00px;color:#111;transform:scaleX(1.1169);">Page 1 of 1</span>
<span class="t" style="left:480.50px;top:311px;font-size:7.00px;color:#111;transform:scaleX(1.1284);">Jump to Page</span>
<span class="t" style="left:548.70px;top:310px;font-size:7.60px;color:#222;transform:scaleX(0.7085);-webkit-text-stroke:0.15px;">1</span>
<span class="t" style="left:578.00px;top:312px;font-size:5.90px;color:#111;transform:scaleX(1.0497);-webkit-text-stroke:0;">Go</span>
<span class="t" style="left:264.40px;top:422px;font-size:7.00px;color:#111;transform:scaleX(1.1365);">Total Records: 2</span>
<span class="t" style="left:382.50px;top:415px;font-size:7.00px;color:#111;transform:scaleX(1.1169);">Page 1 of 1</span>
<span class="t" style="left:480.50px;top:422px;font-size:7.00px;color:#111;transform:scaleX(1.1284);">Jump to Page</span>
<span class="t" style="left:548.70px;top:421px;font-size:7.60px;color:#222;transform:scaleX(0.7085);-webkit-text-stroke:0.15px;">1</span>
<span class="t" style="left:578.00px;top:423px;font-size:5.90px;color:#111;transform:scaleX(1.0497);-webkit-text-stroke:0;">Go</span>
<span class="t" style="left:44.50px;top:338px;font-size:7.00px;color:#1441a4;transform:scaleX(1.2000);font-weight:bold;">Select</span>
<span class="t" style="left:94.25px;top:334px;font-size:7.00px;color:#1441a4;transform:scaleX(1.2372);font-weight:bold;text-decoration:underline;text-decoration-thickness:0.7px;text-underline-offset:0.6px;">PR/Award</span>
<span class="t" style="left:109.25px;top:342px;font-size:7.00px;color:#1441a4;transform:scaleX(1.1505);font-weight:bold;text-decoration:underline;text-decoration-thickness:0.7px;text-underline-offset:0.6px;">No</span>
<span class="t" style="left:152.00px;top:334px;font-size:7.00px;color:#1441a4;transform:scaleX(1.1807);font-weight:bold;text-decoration:underline;text-decoration-thickness:0.7px;text-underline-offset:0.6px;">Schedule</span>
<span class="t" style="left:165.00px;top:342px;font-size:7.00px;color:#1441a4;transform:scaleX(1.1237);font-weight:bold;text-decoration:underline;text-decoration-thickness:0.7px;text-underline-offset:0.6px;">No</span>
<span class="t" style="left:200.75px;top:338px;font-size:7.00px;color:#1441a4;transform:scaleX(1.1387);font-weight:bold;text-decoration:underline;text-decoration-thickness:0.7px;text-underline-offset:0.6px;">Rank</span>
<span class="t" style="left:240.00px;top:334px;font-size:7.00px;color:#1441a4;transform:scaleX(1.1916);font-weight:bold;text-decoration:underline;text-decoration-thickness:0.7px;text-underline-offset:0.6px;">Applicant</span>
<span class="t" style="left:247.50px;top:342px;font-size:7.00px;color:#1441a4;transform:scaleX(1.2187);font-weight:bold;text-decoration:underline;text-decoration-thickness:0.7px;text-underline-offset:0.6px;">Name</span>
<span class="t" style="left:297.50px;top:338px;font-size:7.00px;color:#1441a4;transform:scaleX(1.1971);font-weight:bold;text-decoration:underline;text-decoration-thickness:0.7px;text-underline-offset:0.6px;">State</span>
<span class="t" style="left:340.50px;top:330px;font-size:7.00px;color:#1441a4;transform:scaleX(1.1861);font-weight:bold;text-decoration:underline;text-decoration-thickness:0.7px;text-underline-offset:0.6px;">ED Program</span>
<span class="t" style="left:332.00px;top:338px;font-size:7.00px;color:#1441a4;transform:scaleX(1.2199);font-weight:bold;text-decoration:underline;text-decoration-thickness:0.7px;text-underline-offset:0.6px;">Contact / Phone</span>
<span class="t" style="left:348.75px;top:346px;font-size:7.00px;color:#1441a4;transform:scaleX(1.2097);font-weight:bold;text-decoration:underline;text-decoration-thickness:0.7px;text-underline-offset:0.6px;">Number</span>
<span class="t" style="left:422.00px;top:330px;font-size:7.00px;color:#1441a4;transform:scaleX(1.1614);font-weight:bold;text-decoration:underline;text-decoration-thickness:0.7px;text-underline-offset:0.6px;">Budget</span>
<span class="t" style="left:422.50px;top:338px;font-size:7.00px;color:#1441a4;transform:scaleX(1.2043);font-weight:bold;text-decoration:underline;text-decoration-thickness:0.7px;text-underline-offset:0.6px;">Period</span>
<span class="t" style="left:420.00px;top:346px;font-size:7.00px;color:#1441a4;transform:scaleX(1.2175);font-weight:bold;text-decoration:underline;text-decoration-thickness:0.7px;text-underline-offset:0.6px;">Created</span>
<span class="t" style="left:485.00px;top:330px;font-size:7.00px;color:#1441a4;transform:scaleX(1.1878);font-weight:bold;text-decoration:underline;text-decoration-thickness:0.7px;text-underline-offset:0.6px;">No of</span>
<span class="t" style="left:481.75px;top:338px;font-size:7.00px;color:#1441a4;transform:scaleX(1.1406);font-weight:bold;text-decoration:underline;text-decoration-thickness:0.7px;text-underline-offset:0.6px;">Budget</span>
<span class="t" style="left:480.00px;top:346px;font-size:7.00px;color:#1441a4;transform:scaleX(1.1971);font-weight:bold;text-decoration:underline;text-decoration-thickness:0.7px;text-underline-offset:0.6px;">Periods</span>
<span class="t" style="left:535.00px;top:334px;font-size:7.00px;color:#1441a4;transform:scaleX(1.2211);font-weight:bold;text-decoration:underline;text-decoration-thickness:0.7px;text-underline-offset:0.6px;">Total Months of</span>
<span class="t" style="left:540.00px;top:342px;font-size:7.00px;color:#1441a4;transform:scaleX(1.2267);font-weight:bold;text-decoration:underline;text-decoration-thickness:0.7px;text-underline-offset:0.6px;">Performance</span>
<span class="t" style="left:90.75px;top:364px;font-size:6.40px;color:#111;transform:scaleX(1.1868);-webkit-text-stroke:0.06px;">2003A090001</span>
<span class="t" style="left:168.20px;top:364px;font-size:6.40px;color:#111;transform:scaleX(1.0105);-webkit-text-stroke:0.06px;">2</span>
<span class="t" style="left:209.25px;top:364px;font-size:6.40px;color:#111;transform:scaleX(0.8421);-webkit-text-stroke:0.06px;">1</span>
<span class="t" style="left:241.75px;top:364px;font-size:6.40px;color:#111;transform:scaleX(1.2248);-webkit-text-stroke:0.06px;">College of</span>
<span class="t" style="left:239.00px;top:372px;font-size:6.40px;color:#111;transform:scaleX(1.2412);-webkit-text-stroke:0.06px;">William and</span>
<span class="t" style="left:252.00px;top:379px;font-size:6.40px;color:#111;transform:scaleX(1.0913);-webkit-text-stroke:0.06px;">Mary</span>
<span class="t" style="left:303.75px;top:364px;font-size:6.40px;color:#111;transform:scaleX(1.0853);-webkit-text-stroke:0.06px;">VA</span>
<span class="t" style="left:429.50px;top:364px;font-size:6.40px;color:#111;transform:scaleX(1.1737);-webkit-text-stroke:0.06px;">Yes</span>
<span class="t" style="left:493.45px;top:364px;font-size:6.40px;color:#111;transform:scaleX(1.0105);-webkit-text-stroke:0.06px;">3</span>
<span class="t" style="left:562.00px;top:364px;font-size:6.40px;color:#111;transform:scaleX(1.1956);-webkit-text-stroke:0.06px;">27</span>
<span class="t" style="left:90.75px;top:396px;font-size:6.40px;color:#111;transform:scaleX(1.1868);-webkit-text-stroke:0.06px;">2003A090002</span>
<span class="t" style="left:168.20px;top:396px;font-size:6.40px;color:#111;transform:scaleX(1.0105);-webkit-text-stroke:0.06px;">2</span>
<span class="t" style="left:208.95px;top:396px;font-size:6.40px;color:#111;transform:scaleX(1.0105);-webkit-text-stroke:0.06px;">2</span>
<span class="t" style="left:237.00px;top:396px;font-size:6.40px;color:#111;transform:scaleX(1.1907);-webkit-text-stroke:0.06px;">Bard College</span>
<span class="t" style="left:303.75px;top:396px;font-size:6.40px;color:#111;transform:scaleX(0.9842);-webkit-text-stroke:0.06px;">NY</span>
<span class="t" style="left:429.50px;top:396px;font-size:6.40px;color:#111;transform:scaleX(1.1737);-webkit-text-stroke:0.06px;">Yes</span>
<span class="t" style="left:493.45px;top:396px;font-size:6.40px;color:#111;transform:scaleX(1.0105);-webkit-text-stroke:0.06px;">3</span>
<span class="t" style="left:562.00px;top:396px;font-size:6.40px;color:#111;transform:scaleX(1.1956);-webkit-text-stroke:0.06px;">27</span>
<span class="t" style="left:32.00px;top:456px;font-size:7.00px;color:#1a1a1a;transform:scaleX(1.1217);-webkit-text-stroke:0;">Maintain Budget</span>
<span class="t" style="left:100.00px;top:456px;font-size:7.00px;color:#1a1a1a;transform:scaleX(1.1636);-webkit-text-stroke:0;">Inquire Budget</span>
<span class="t" style="left:165.00px;top:456px;font-size:7.00px;color:#1a1a1a;transform:scaleX(1.1144);-webkit-text-stroke:0;">Maintain Abstracts</span>
<span class="t" style="left:240.75px;top:456px;font-size:7.00px;color:#1a1a1a;transform:scaleX(1.1651);-webkit-text-stroke:0;">Inquire Abstracts</span>
</div>
</body></html>
